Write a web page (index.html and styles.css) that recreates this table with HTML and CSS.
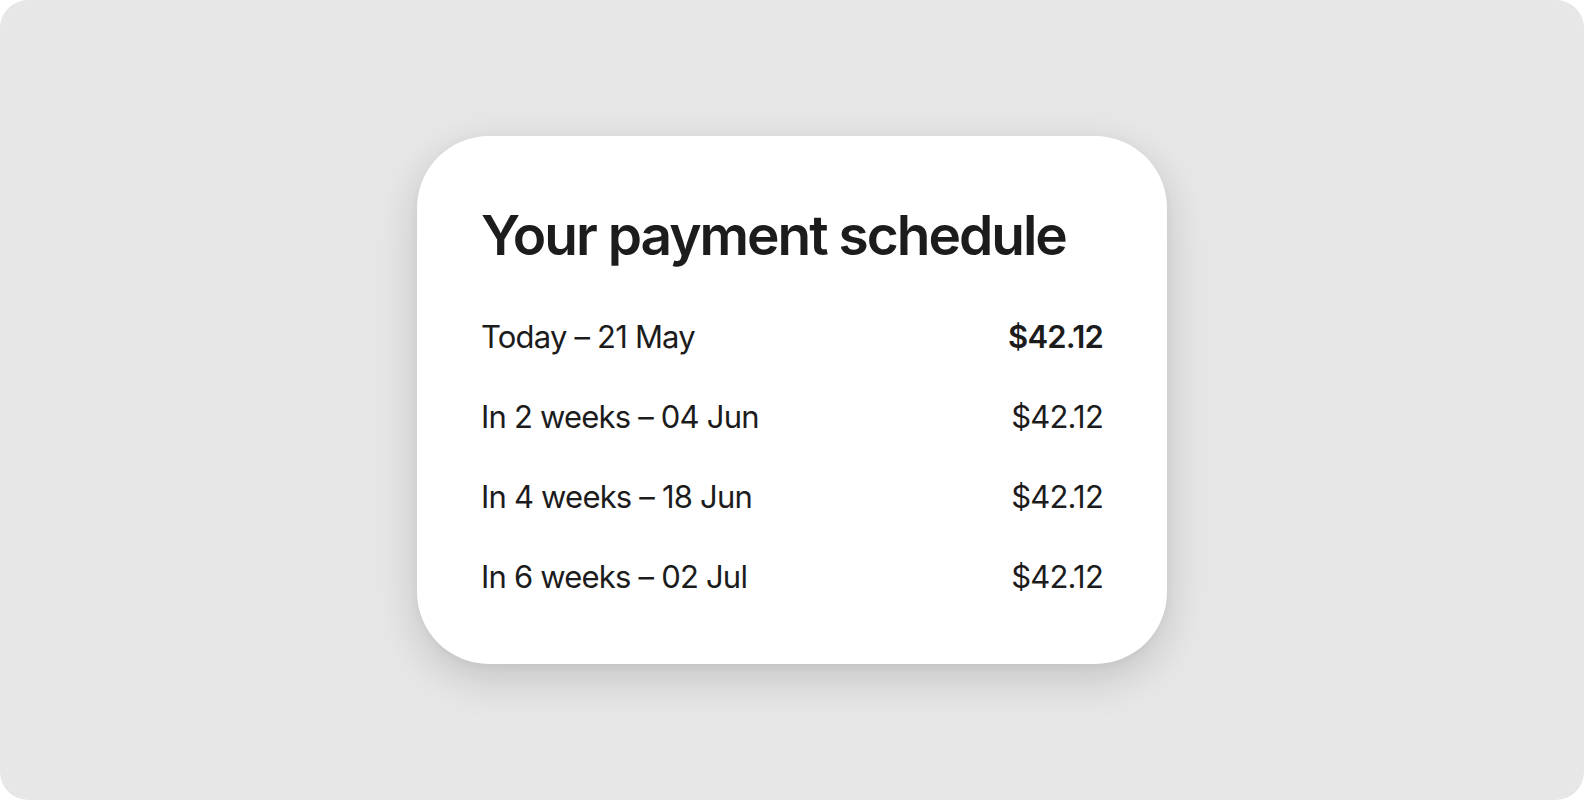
FILE: index.html
```html
<!DOCTYPE html>
<html>
<head>
<meta charset="utf-8">
<link rel="stylesheet" href="styles.css">
</head>
<body>
<div class="frame">
  <div class="card">
    <h1 class="title">Your payment schedule</h1>
    <ul class="rows">
      <li class="row"><span class="label">Today – 21 May</span><span class="amount strong">$42.12</span></li>
      <li class="row"><span class="label">In 2 weeks – 04 Jun</span><span class="amount">$42.12</span></li>
      <li class="row"><span class="label">In 4 weeks – 18 Jun</span><span class="amount">$42.12</span></li>
      <li class="row"><span class="label">In 6 weeks – 02 Jul</span><span class="amount">$42.12</span></li>
    </ul>
  </div>
</div>
</body>
</html>
```
FILE: styles.css
```css
html, body {
  margin: 0;
  padding: 0;
  background: #ffffff;
}
body {
  font-family: Inter, "Noto Sans", sans-serif;
  color: #1a1a1a;
}
.frame {
  width: 1584px;
  height: 800px;
  background: #e7e7e7;
  border-radius: 28px;
  display: flex;
  align-items: center;
  justify-content: center;
}
.card {
  box-sizing: border-box;
  width: 750px;
  height: 528px;
  background: #ffffff;
  border-radius: 72px;
  box-shadow: 0 14px 44px rgba(0, 0, 0, 0.16), 0 2px 8px rgba(0, 0, 0, 0.04);
  padding: 63px 64px 0 64px;
}
.title {
  margin: 0;
  font-size: 55px;
  font-weight: 600;
  line-height: 72px;
  letter-spacing: -2px;
  color: #1c1c1c;
}
.rows {
  list-style: none;
  margin: 46px 0 0 0;
  padding: 0;
  display: flex;
  flex-direction: column;
  gap: 40px;
}
.row {
  display: flex;
  justify-content: space-between;
  align-items: center;
  font-size: 31px;
  line-height: 40px;
  letter-spacing: -0.8px;
  color: #1c1c1c;
}
.amount.strong {
  font-weight: 600;
}
```
